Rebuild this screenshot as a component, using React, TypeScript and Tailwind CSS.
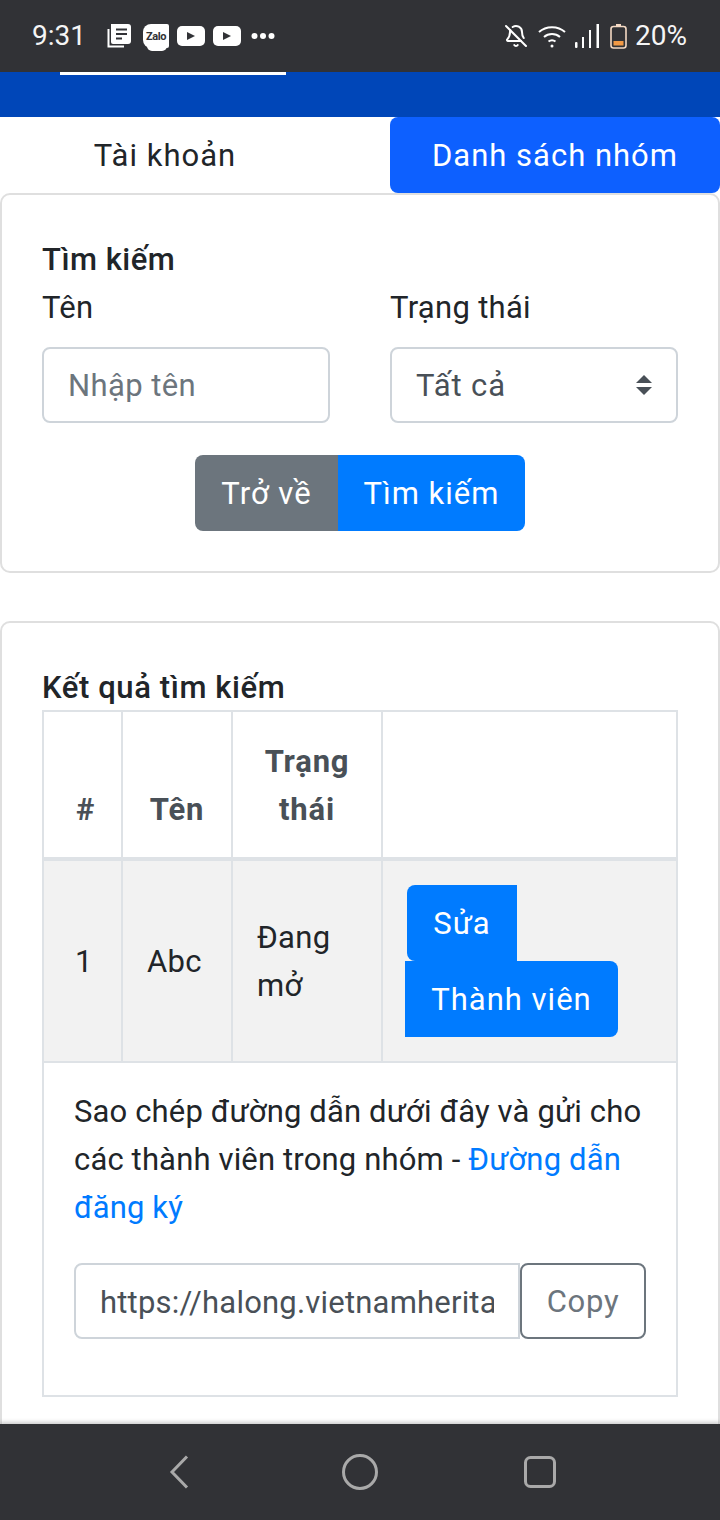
import { BellOff } from "lucide-react";

function NewsIcon() {
  return (
    <svg width="24" height="24" viewBox="0 0 24 24" fill="none">
      <path d="M1.500 5v17.500H17" stroke="#fff" strokeWidth="2" />
      <path d="M4 0h17a3 3 0 0 1 3 3v14a3 3 0 0 1-3 3H6a2 2 0 0 1-2-2z" fill="#fff" />
      <path d="M9 5.500h11M9 10h11M9 14.500h6" stroke="#313236" strokeWidth="2.200" />
    </svg>
  );
}

function ZaloIcon() {
  return (
    <div className="relative flex h-[24px] w-[26px] items-center justify-center rounded-l-[8px] rounded-r-[2px] bg-white">
      <span className="text-[11px] font-bold leading-none tracking-[-0.4px] text-[#313236]">Zalo</span>
      <span className="absolute bottom-[-3px] left-[4px] h-[5px] w-[20px] rounded-b-full bg-white" />
    </div>
  );
}

function PlayIcon() {
  return (
    <div className="flex h-[20px] w-[28px] items-center justify-center rounded-[5px] bg-white">
      <svg width="10" height="10" viewBox="0 0 10 10">
        <path d="M1 1l8 4-8 4z" fill="#313236" />
      </svg>
    </div>
  );
}

function StatusBar() {
  return (
    <div className="flex h-[72px] items-center bg-[#313236] pl-[32px] pr-[33px] text-[28px] tracking-normal text-[#f5f5f5]">
      <span className="w-[75px] leading-none">9:31</span>
      <div className="flex items-center">
        <NewsIcon />
        <div className="ml-[12px]">
          <ZaloIcon />
        </div>
        <div className="ml-[8px]">
          <PlayIcon />
        </div>
        <div className="ml-[8px]">
          <PlayIcon />
        </div>
        <svg width="24" height="8" viewBox="0 0 24 8" className="ml-[10px]" fill="#fff">
          <circle cx="3.500" cy="4" r="3" />
          <circle cx="12" cy="4" r="3" />
          <circle cx="20.500" cy="4" r="3" />
        </svg>
      </div>
      <div className="ml-auto flex items-center">
        <BellOff size={24} color="#fff" strokeWidth={2} />
        <svg width="28" height="24" viewBox="0 0 28 24" fill="none" stroke="#fff" strokeWidth="2" className="ml-[10px]">
          <path d="M1 8c7-6.500 19-6.500 26 0" />
          <path d="M6 13c4.500-4 11.500-4 16 0" />
          <path d="M10.500 17.500c2-1.500 5-1.500 7 0" />
          <circle cx="14" cy="22" r="1.500" fill="#fff" stroke="none" />
        </svg>
        <svg width="24" height="24" viewBox="0 0 24 24" fill="#fff" className="ml-[9px]">
          <rect x="0" y="18" width="2.500" height="6" rx="1" />
          <rect x="7" y="13" width="2" height="11" />
          <rect x="14" y="6" width="2" height="18" />
          <rect x="21.500" y="0" width="2.500" height="24" />
        </svg>
        <svg width="17" height="25" viewBox="0 0 17 25" fill="none" className="ml-[11px]">
          <path d="M6 1h5" stroke="#f4d9c4" strokeWidth="2" />
          <rect x="1" y="2.500" width="15" height="21.500" rx="2.500" stroke="#f4d9c4" strokeWidth="1.600" />
          <rect x="3.500" y="17" width="10" height="4.500" fill="#f39a45" />
        </svg>
        <span className="ml-[8px] leading-none">20%</span>
      </div>
    </div>
  );
}

function NavBar() {
  return (
    <div className="relative z-10 flex h-[96px] shrink-0 items-center bg-[#313236] pl-[169px] shadow-[0_-2px_4px_rgba(0,0,0,0.2)]">
      <svg width="20" height="34" viewBox="0 0 20 34" fill="none" stroke="#a9a9a9" strokeWidth="3">
        <path d="M18 1.500L3 17l15 15.500" />
      </svg>
      <svg width="36" height="36" viewBox="0 0 36 36" fill="none" stroke="#a9a9a9" strokeWidth="3" className="ml-[153px]">
        <circle cx="18" cy="18" r="16.500" />
      </svg>
      <svg width="32" height="32" viewBox="0 0 32 32" fill="none" stroke="#a9a9a9" strokeWidth="3" className="ml-[146px]">
        <rect x="1.500" y="1.500" width="29" height="29" rx="5" />
      </svg>
    </div>
  );
}

export default function App() {
  return (
    <div className="flex h-[1520px] flex-col overflow-hidden bg-white font-['Roboto',sans-serif] text-[31px] leading-[48px] tracking-[0.3px] text-[#212529]">
      <StatusBar />
      <div className="relative h-[45px] shrink-0 bg-[#0046b8]">
        <div className="absolute left-[60px] top-0 h-[3px] w-[226px] bg-white" />
      </div>

      <div className="min-h-0 flex-1 overflow-hidden">
        <div className="flex h-[76px] items-center tracking-[1px]">
          <a className="w-[330px] pt-[2px] text-center">Tài khoản</a>
          <a className="ml-auto flex h-full w-[330px] items-center justify-center rounded-[8px] bg-[#0d60ff] pt-[2px] text-white">
            Danh sách nhóm
          </a>
        </div>

        <div className="h-[380px] rounded-[10px] border-2 border-[#dfdfdf] px-[40px] pt-[41px]">
          <div className="font-medium tracking-[0.5px]">Tìm kiếm</div>
          <div className="grid grid-cols-[288px_288px] gap-x-[60px]">
            <div>
              <label className="block">Tên</label>
              <input
                placeholder="Nhập tên"
                className="mt-[15px] block h-[76px] w-full rounded-[8px] border-2 border-[#ced4da] px-[24px] tracking-[0.4px] text-[#495057] outline-none placeholder:text-[#6c757d]"
              />
            </div>
            <div>
              <label className="block">Trạng thái</label>
              <div className="relative mt-[15px]">
                <select className="block h-[76px] w-full appearance-none rounded-[8px] border-2 border-[#ced4da] bg-white px-[24px] pt-[2px] tracking-[0.9px] text-[#495057] outline-none">
                  <option>Tất cả</option>
                </select>
                <svg width="16" height="20" viewBox="0 0 16 20" fill="#495057" className="pointer-events-none absolute right-[26px] top-[28px]">
                  <path d="M8 0l8 8H0zM0 12h16l-8 8z" />
                </svg>
              </div>
            </div>
          </div>
          <div className="mt-[32px] flex justify-center tracking-[1px]">
            <button className="h-[76px] w-[143px] rounded-l-[8px] bg-[#6c757d] pt-[2px] text-white">Trở về</button>
            <button className="h-[76px] w-[187px] rounded-r-[8px] bg-[#007bff] pt-[2px] text-white">Tìm kiếm</button>
          </div>
        </div>

        <div className="mt-[48px] rounded-[10px] border-2 border-[#dfdfdf] px-[40px] pb-[40px] pt-[41px]">
          <div className="mb-[-2px] font-medium tracking-[0.6px]">Kết quả tìm kiếm</div>
          <table className="w-[636px] table-fixed border-collapse">
            <colgroup>
              <col className="w-[79px]" />
              <col className="w-[110px]" />
              <col className="w-[150px]" />
              <col />
            </colgroup>
            <thead>
              <tr className="h-[148px] align-bottom font-bold tracking-[0.8px] text-[#495057]">
                <th className="border-2 border-b-4 border-[#dee2e6] pb-[23px] pl-[6px] text-center">#</th>
                <th className="border-2 border-b-4 border-[#dee2e6] px-[24px] pb-[23px] text-center">Tên</th>
                <th className="border-2 border-b-4 border-[#dee2e6] px-[24px] pb-[23px] text-center">Trạng thái</th>
                <th className="border-2 border-b-4 border-[#dee2e6]" />
              </tr>
            </thead>
            <tbody>
              <tr className="h-[203px] bg-[#f2f2f2]">
                <td className="border-2 border-[#dee2e6] pl-[31px] pt-[2px]">1</td>
                <td className="border-2 border-[#dee2e6] pl-[24px] pt-[2px]">Abc</td>
                <td className="border-2 border-[#dee2e6] px-[24px] pt-[2px]">Đang mở</td>
                <td className="border-2 border-[#dee2e6] pl-[22px] tracking-[1px]">
                  <button className="ml-[2px] block h-[76px] w-[110px] rounded-l-[8px] bg-[#007bff] pt-[2px] text-white">Sửa</button>
                  <button className="block h-[76px] w-[213px] rounded-r-[8px] bg-[#007bff] pt-[2px] text-white">Thành viên</button>
                </td>
              </tr>
              <tr className="h-[334px]">
                <td colSpan={4} className="border-2 border-[#dee2e6] px-[30px] pb-[56px] pt-[25px] align-top tracking-[0.15px]">
                  <p>
                    Sao chép đường dẫn dưới đây và gửi cho các thành viên trong nhóm -{" "}
                    <a className="text-[#007bff]">Đường dẫn đăng ký</a>
                  </p>
                  <div className="mt-[31px] flex">
                    <input
                      readOnly
                      value="https://halong.vietnamheritage.com.vn/dang-ky"
                      className="h-[76px] w-[446px] rounded-l-[8px] border-2 border-[#ced4da] px-[24px] pt-[2px] tracking-[0.2px] text-[#495057] outline-none"
                    />
                    <button className="h-[76px] w-[126px] rounded-[8px] border-2 border-[#6c757d] pt-[2px] tracking-[0.7px] text-[#6c757d]">Copy</button>
                  </div>
                </td>
              </tr>
            </tbody>
          </table>
        </div>
      </div>
      <NavBar />
    </div>
  );
}
